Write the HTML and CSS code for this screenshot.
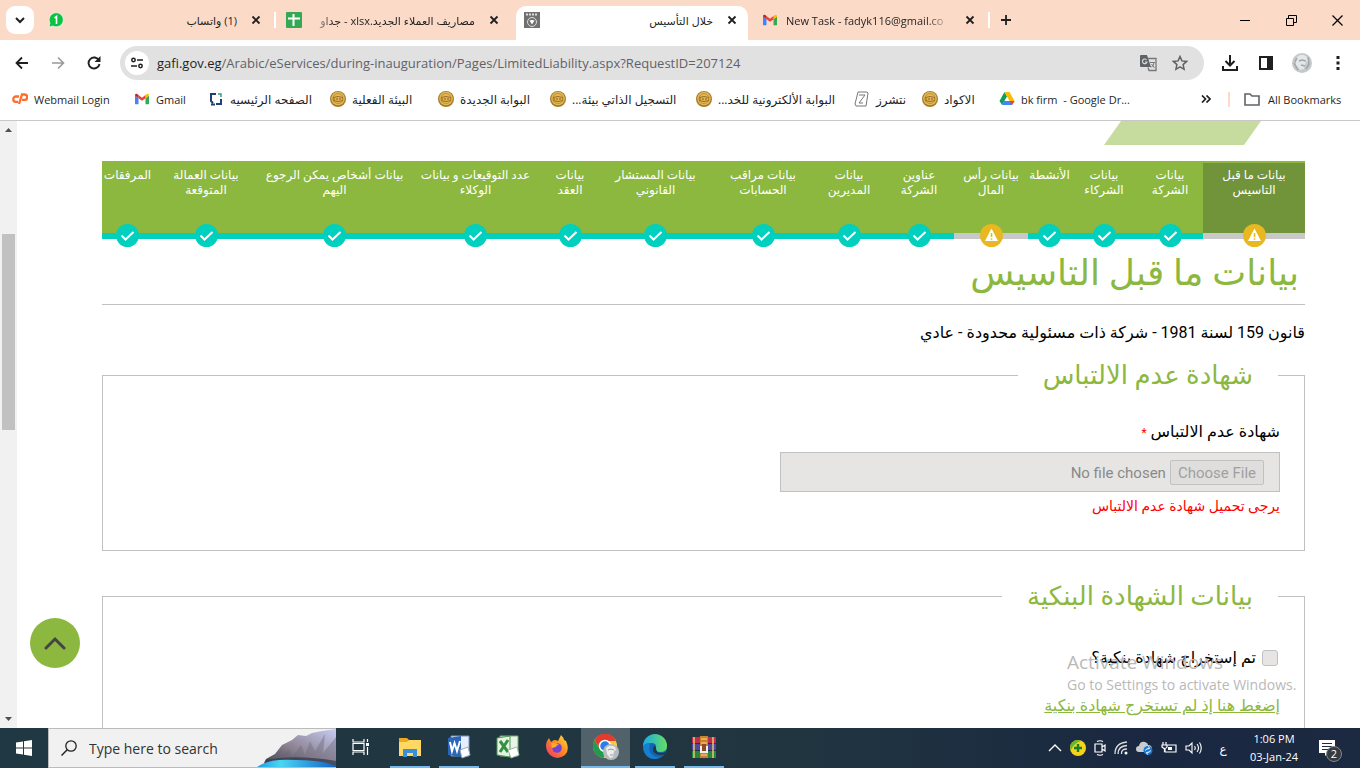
FILE: index.html
```html
<!DOCTYPE html>
<html lang="ar">
<head>
<meta charset="utf-8">
<title>خلال التأسيس</title>
<link rel="stylesheet" href="styles.css">
</head>
<body>
<svg class="defs" aria-hidden="true">
  <defs>
    <symbol id="close" viewBox="0 0 10 10"><path d="M1.500 1.500l7 7M8.500 1.500l-7 7" stroke="#1f1f1f" stroke-width="1.800"/></symbol>
    <symbol id="gmail" viewBox="0 0 16 12"><path d="M1 12h3V5L0 2v9q0 1 1 1z" fill="#4285f4"/><path d="M12 12h3q1 0 1-1V2l-4 3z" fill="#34a853"/><path d="M12 5l4-3V1.500Q15.500-.5 13.500.4L12 1.500z" fill="#fbbc04"/><path d="M4 5l4 3 4-3V1.500l-4 3-4-3z" fill="#ea4335"/><path d="M0 2l4 3V1.500L2.500.4Q.5-.5 0 1.500z" fill="#c5221f"/></symbol>
    <symbol id="seal" viewBox="0 0 16 16"><circle cx="8" cy="8" r="8" fill="#a87a2c"/><circle cx="8" cy="7.500" r="6.800" fill="#e0b954"/><circle cx="8" cy="7.500" r="5" fill="none" stroke="#c39336"/><path d="M3 6.500q5-2 10 0M3 9.500q5 2 10 0" stroke="#9c6e22" fill="none"/><path d="M3 8h10" stroke="#a87a2c" stroke-width="1.500" stroke-dasharray="2 1"/></symbol>
    <symbol id="ok" viewBox="0 0 23 23"><circle cx="11.500" cy="11.500" r="11.500" fill="#00d0bd"/><path d="M5.500 11.500l4 4L17.500 8" fill="none" stroke="#fff" stroke-width="2"/></symbol>
    <symbol id="warn" viewBox="0 0 23 23"><circle cx="11.500" cy="11.500" r="11.500" fill="#e7b820"/><path d="M11.500 4.500L18 17H5z" fill="#fff"/><path d="M11.500 9v4M11.500 14.200v1.600" stroke="#e7b820" stroke-width="1.600"/></symbol>
  </defs>
</svg>

<header class="browser">
  <div class="tabstrip">
    <button class="tab-search" aria-label="Search tabs"><svg width="12" height="8" viewBox="0 0 12 8"><path d="M2 2l4 4 4-4" fill="none" stroke="#1f1f1f" stroke-width="2"/></svg></button>
    <div class="tab">
      <svg class="fav" viewBox="0 0 16 16"><path d="M1 15l1-4a7 7 0 1 1 3 3z" fill="#0cc143" stroke="#fff" stroke-width=".6"/><path d="M6.500 6L8.500 4.500V12" fill="none" stroke="#fff" stroke-width="1.600"/></svg>
      <span class="tab-name" dir="rtl">(1) واتساب</span>
      <button class="close" aria-label="Close"><svg width="10" height="10"><use href="#close"/></svg></button>
    </div>
    <div class="tab divided">
      <svg class="fav" viewBox="0 0 16 16"><rect width="16" height="16" rx="1" fill="#34a853"/><path d="M2 6.500h12M7.500 2v12" stroke="#fff" stroke-width="2"/></svg>
      <span class="tab-name fade-left" dir="rtl">مصاريف العملاء الجديد.xlsx - جداو</span>
      <button class="close" aria-label="Close"><svg width="10" height="10"><use href="#close"/></svg></button>
    </div>
    <div class="tab active">
      <svg class="fav" viewBox="0 0 16 16"><rect width="16" height="16" fill="#707070"/><path d="M2 2.500h12" stroke="#ddd" stroke-width="2" stroke-dasharray="2 1"/><circle cx="8" cy="10" r="4.500" fill="none" stroke="#ddd"/><path d="M5.500 8.500q2.500-1 5 0L8 12.500z" fill="#fff"/></svg>
      <span class="tab-name" dir="rtl">خلال التأسيس</span>
      <button class="close" aria-label="Close"><svg width="10" height="10"><use href="#close"/></svg></button>
    </div>
    <div class="tab last">
      <svg class="fav" viewBox="0 0 16 16"><use href="#gmail" x="1" y="2" width="14" height="12"/></svg>
      <span class="tab-name fade-right">New Task - fadyk116@gmail.co</span>
      <button class="close" aria-label="Close"><svg width="10" height="10"><use href="#close"/></svg></button>
    </div>
    <button class="plain new-tab" aria-label="New tab"><svg width="12" height="12"><path d="M6 1v10M1 6h10" stroke="#1f1f1f" stroke-width="1.800"/></svg></button>
    <div class="window-buttons">
      <button class="plain" aria-label="Minimize"><svg width="10" height="10"><path d="M0 5.500h10" stroke="#000"/></svg></button>
      <button class="plain" aria-label="Restore"><svg width="11" height="11"><path d="M.5 3.500h7v7h-7zM2.500 3.500v-3h8v7h-3" fill="none" stroke="#000"/></svg></button>
      <button class="plain" aria-label="Close window"><svg width="11" height="11"><path d="M.5.500l10 10M10.500.500l-10 10" stroke="#000" stroke-width="1.200"/></svg></button>
    </div>
  </div>

  <div class="toolbar">
    <button class="plain" aria-label="Back"><svg width="14" height="14"><path d="M13 7H2M7 1.500L1.500 7 7 12.500" fill="none" stroke="#1f1f1f" stroke-width="1.800"/></svg></button>
    <button class="plain" aria-label="Forward"><svg width="14" height="14"><path d="M1 7h11M7 1.500L12.500 7 7 12.500" fill="none" stroke="#999" stroke-width="1.600"/></svg></button>
    <button class="plain" aria-label="Reload"><svg width="14" height="14"><path d="M12 4.500A5.500 5.500 0 1 0 12.500 8" fill="none" stroke="#1f1f1f" stroke-width="1.900"/><path d="M13.500 0v6h-6z" fill="#1f1f1f"/></svg></button>
    <div class="omnibox">
      <button class="site-info" aria-label="Site information"><svg width="14" height="12"><circle cx="3.500" cy="3" r="1.700" fill="none" stroke="#1f1f1f" stroke-width="1.500"/><circle cx="10.500" cy="9" r="1.700" fill="none" stroke="#1f1f1f" stroke-width="1.500"/><path d="M7 3h6M1 9h6" stroke="#1f1f1f" stroke-width="1.700"/></svg></button>
      <div class="url"><b>gafi.gov.eg</b>/Arabic/eServices/during-inauguration/Pages/LimitedLiability.aspx?RequestID=207124</div>
      <button class="plain" aria-label="Translate"><svg width="17" height="17"><path d="M1 0h6l4 12H1q-1 0-1-1V1q0-1 1-1z" fill="#5f6368"/><path d="M8 3.500h8v12H9l-1-3" fill="none" stroke="#777" stroke-width="1.300"/><path d="M6.500 4.800A2.300 2.300 0 1 0 7 7H5" fill="none" stroke="#ddd" stroke-width="1.100"/><path d="M10 7.500h5M14 7.500q0 3-3 5M11.500 9l3 4" fill="none" stroke="#777"/></svg></button>
      <button class="plain" aria-label="Bookmark"><svg width="16" height="16" viewBox="0 0 16 16"><path d="M8 1.500l1.900 4.400 4.700.5-3.500 3.200 1 4.700L8 11.900l-4.100 2.400 1-4.700L1.400 6.400l4.700-.5z" fill="none" stroke="#5f6368" stroke-width="1.500"/></svg></button>
    </div>
    <button class="plain tool" aria-label="Downloads"><svg width="16" height="16"><path d="M8 0v10M3.500 6L8 10.500 12.500 6M1 11v4h14v-4" fill="none" stroke="#1f1f1f" stroke-width="2"/></svg></button>
    <button class="plain tool" aria-label="Side panel"><svg width="14" height="14"><path d="M1 1h12v12H1z" fill="none" stroke="#1f1f1f" stroke-width="2"/><path d="M8 1h5v12H8z" fill="#1f1f1f"/></svg></button>
    <button class="plain tool" aria-label="Profile"><svg width="20" height="20"><circle cx="10" cy="10" r="10" fill="#c3c8cb"/><path d="M4 5q5-6 11-1l2 4-3 1-2 7-4 1-4-5z" fill="#e5e6e7"/><path d="M7 8l3-1 4 1M9 12l4 1M2 10l4 7M16 4l1 7-3 5M5 5L3 9" fill="none" stroke="#a1a6aa" stroke-width="1.500"/></svg></button>
    <button class="plain tool" aria-label="Menu"><svg width="4" height="16"><path d="M.5 1h3v3h-3zM.5 6.500h3v3h-3zM.5 12h3v3h-3z" fill="#1f1f1f"/></svg></button>
  </div>

  <nav class="bookmarks">
    <a href="#"><svg class="fav" viewBox="0 0 16 16"><path d="M7 5.500H4a2.700 2.700 0 0 0 0 5.400h2M7 13l3-9.500h2.500a2.700 2.700 0 0 1 0 5.400H10" fill="none" stroke="#ff6c2c" stroke-width="2.300"/></svg><span class="latin">Webmail Login</span></a>
    <a href="#"><svg class="fav" viewBox="0 0 16 16"><use href="#gmail" x="1" y="2" width="14" height="12"/></svg><span class="latin">Gmail</span></a>
    <a href="#"><svg class="fav" viewBox="0 0 16 16"><path d="M8 3H3v7l2 2M8 13h5V8M3 13.500h4" fill="none" stroke="#1f3f75" stroke-width="2"/><path d="M10 3h3v3" fill="none" stroke="#359a8d" stroke-width="1.500"/></svg><span dir="rtl">الصفحه الرئيسيه</span></a>
    <a href="#"><svg class="fav"><use href="#seal"/></svg><span dir="rtl">البيئة الفعلية</span></a>
    <a href="#"><svg class="fav"><use href="#seal"/></svg><span dir="rtl">البوابة الجديدة</span></a>
    <a href="#"><svg class="fav"><use href="#seal"/></svg><span dir="rtl">التسجيل الذاتي بيئة...</span></a>
    <a href="#"><svg class="fav"><use href="#seal"/></svg><span dir="rtl">البوابة الألكترونية للخد...</span></a>
    <a href="#"><svg class="fav" viewBox="0 0 16 16"><path d="M4 1h9l1 1-2 13H2L1 13zM5 4h6l-6 8h4" fill="none" stroke="#777"/></svg><span dir="rtl">نتشرز</span></a>
    <a href="#"><svg class="fav"><use href="#seal"/></svg><span dir="rtl">الاكواد</span></a>
    <a href="#"><svg class="fav" viewBox="0 0 16 16"><path d="M5.500 1L8 5.500 3 14 .5 10z" fill="#0f9d58"/><path d="M5.500 1h5L15.500 10h-5z" fill="#fbbc04"/><path d="M5 10h10.500L13 14H3z" fill="#4285f4"/><path d="M10.500 10h5L13 14z" fill="#ea4335"/></svg><span class="latin">bk firm &nbsp;- Google Dr...</span></a>
    <button class="plain" aria-label="More bookmarks"><svg width="10" height="8"><path d="M1 .5L4.500 4 1 7.500M5.500.5L9 4 5.500 7.500" fill="none" stroke="#1f1f1f" stroke-width="1.700"/></svg></button>
    <a class="all" href="#"><svg width="16" height="13"><path d="M1 1h5l2 2h7v9H1z" fill="none" stroke="#5f6368" stroke-width="1.600"/></svg><span class="latin">All Bookmarks</span></a>
  </nav>
</header>

<div class="viewport">
  <div class="scrollbar">
    <svg width="7" height="4"><path d="M0 4l3.500-4L7 4z" fill="#505050"/></svg>
    <div class="track"><div class="thumb"></div></div>
    <svg width="7" height="4"><path d="M0 0l3.500 4L7 0z" fill="#505050"/></svg>
  </div>

  <main class="page" dir="rtl">
    <div class="ribbon"></div>
    <ol class="steps">
      <li class="todo current"><span>بيانات ما قبل<br>التاسيس</span><svg><use href="#warn"/></svg></li>
      <li><span>بيانات<br>الشركة</span><svg><use href="#ok"/></svg></li>
      <li><span>بيانات<br>الشركاء</span><svg><use href="#ok"/></svg></li>
      <li><span>الأنشطة</span><svg><use href="#ok"/></svg></li>
      <li class="todo"><span>بيانات رأس<br>المال</span><svg><use href="#warn"/></svg></li>
      <li><span>عناوين<br>الشركة</span><svg><use href="#ok"/></svg></li>
      <li><span>بيانات<br>المديرين</span><svg><use href="#ok"/></svg></li>
      <li><span>بيانات مراقب<br>الحسابات</span><svg><use href="#ok"/></svg></li>
      <li><span>بيانات المستشار<br>القانوني</span><svg><use href="#ok"/></svg></li>
      <li><span>بيانات<br>العقد</span><svg><use href="#ok"/></svg></li>
      <li><span>عدد التوقيعات و بيانات<br>الوكلاء</span><svg><use href="#ok"/></svg></li>
      <li><span>بيانات أشخاص يمكن الرجوع<br>اليهم</span><svg><use href="#ok"/></svg></li>
      <li><span>بيانات العمالة<br>المتوقعة</span><svg><use href="#ok"/></svg></li>
      <li><span>المرفقات</span><svg><use href="#ok"/></svg></li>
    </ol>
    <h1>بيانات ما قبل التاسيس</h1>
    <p class="law">قانون 159 لسنة 1981 - شركة ذات مسئولية محدودة - عادي</p>

    <fieldset>
      <legend>شهادة عدم الالتباس</legend>
      <label class="field-label" for="cert">شهادة عدم الالتباس <span class="required">*</span></label>
      <input class="file" id="cert" type="file" disabled>
      <p class="error">يرجى تحميل شهادة عدم الالتباس</p>
    </fieldset>

    <fieldset>
      <legend>بيانات الشهادة البنكية</legend>
      <div class="check"><input id="bank" type="checkbox" disabled><label for="bank">تم إستخراج شهادة بنكية؟</label></div>
      <a class="bank-link" href="#">إضغط هنا إذ لم تستخرج شهادة بنكية</a>
    </fieldset>
  </main>

  <button class="to-top" aria-label="Back to top"><svg width="22" height="14"><path d="M2 12l9-9 9 9" fill="none" stroke="#444" stroke-width="3" stroke-linecap="round"/></svg></button>
  <div class="activate"><strong>Activate Windows</strong><span>Go to Settings to activate Windows.</span></div>
</div>

<footer class="taskbar">
  <button class="start" aria-label="Start"><svg width="16" height="16"><path d="M0 2.500l7-1v6H0zM8 1.300L16 0v7.500H8zM0 8.500h7v6l-7-1zM8 8.500h8V16l-8-1.300z" fill="#fff"/></svg></button>
  <div class="search">
    <svg width="16" height="16"><circle cx="10" cy="6" r="5.200" fill="none" stroke="#222" stroke-width="1.300"/><path d="M6.200 9.800L.5 15.500" stroke="#222" stroke-width="1.500"/></svg>
    <input type="text" placeholder="Type here to search" aria-label="Search">
    <svg class="scene" width="80" height="38" viewBox="0 0 80 38"><defs><linearGradient id="rock" x1="0" y1="1" x2="1" y2="0"><stop offset="0" stop-color="#343746"/><stop offset=".45" stop-color="#8d8290"/><stop offset="1" stop-color="#c6cdf5"/></linearGradient><linearGradient id="sea"><stop offset="0" stop-color="#1d9de5"/><stop offset=".3" stop-color="#4bd6f3"/><stop offset="1" stop-color="#1262c8"/></linearGradient></defs><path d="M8 34l2-4 9-5 7-9 10-5 6-5 8 1 6-3 10-2 14-2v38H8z" fill="url(#rock)"/><path d="M26 20l-4 9 11-8 3 7 9-12 4 10 5-14 5 10 10-17-2 19 13-16v24H12z" fill="#666678" opacity=".4"/><path d="M10 31q30-6 70 1v6H8z" fill="#3a3c4c" opacity=".8"/><path d="M1 38q12-9 38-7 28 0 41 6v1z" fill="url(#sea)"/></svg>
  </div>
  <button class="app" aria-label="Task view"><svg width="18" height="16"><path d="M1 0v3h11V0M1 16v-3h11v3M1 4.500h11v7H1zM15.500 0v3M15.500 8v8" fill="none" stroke="#fff" stroke-width="1.200"/><path d="M14 4h3v3h-3z" fill="#fff"/></svg></button>
  <button class="app open" aria-label="File Explorer"><svg width="24" height="24"><path d="M1 3h8l2 2h12v16H1z" fill="#f0a81f"/><path d="M1 7h8l2-2h12v16H1z" fill="#ffd864"/><path d="M5 22v-8h14v8h-4v-4H9v4z" fill="#3a8fd8"/></svg></button>
  <button class="app open" aria-label="Word"><svg width="24" height="24"><path d="M4 1h18v20H4z" fill="#e8eef9" stroke="#7494c9"/><path d="M1 3l13-2v21L1 20z" fill="#2c64b8"/><path d="M3 7l2 9 2.500-8L10 16l3-10" fill="none" stroke="#fff" stroke-width="2"/><path d="M13 15l8-3 2 8-8 3z" fill="#fff" stroke="#9ab"/></svg></button>
  <button class="app" aria-label="Excel"><svg width="24" height="24"><path d="M4 1h18v20H4z" fill="#e9f3e8" stroke="#78ab75"/><path d="M1 3l13-2v21L1 20z" fill="#e6f2e3" stroke="#4f9850"/><path d="M4 6l8 11M12 5L4 17" stroke="#339241" stroke-width="3"/><path d="M12 15l9-3 2 8-8 3z" fill="#fff" stroke="#9b9"/></svg></button>
  <button class="app" aria-label="Firefox"><svg width="24" height="24"><defs><linearGradient id="fox" x1="1" y1="0" x2="0" y2="1"><stop offset="0" stop-color="#ffe44a"/><stop offset=".45" stop-color="#ff8b20"/><stop offset="1" stop-color="#f02e72"/></linearGradient></defs><path d="M2 6l2-3 2 4 3-2q2 0 4 1l3-6q3 3 3 5l2 1q4 9-1 14-8 6-15 0Q-1 14 2 6z" fill="url(#fox)"/><circle cx="12" cy="13" r="4.800" fill="#7542d5"/><path d="M6 8q5-1 8 2-3 0-3 2l-4 1z" fill="#ffad24"/></svg></button>
  <button class="app open selected" aria-label="Chrome"><svg width="28" height="28"><circle cx="13" cy="13" r="12" fill="#ffcd40"/><path d="M2.500 7A12 12 0 0 1 24 8H13L8 16z" fill="#e33b2e"/><path d="M2.500 7l6 10 6 1-3 7A12 12 0 0 1 2.500 7z" fill="#219b4d"/><circle cx="13" cy="13" r="5.500" fill="#2b7de9" stroke="#fff" stroke-width="1.500"/><circle cx="19" cy="19" r="8" fill="#b8bbbd"/><path d="M14 15q4-4 9-1l1 3-2 1-1 6-3 1-3-4z" fill="#ececec"/><path d="M16 17l3-1 3 1M18 22h3" fill="none" stroke="#999"/></svg></button>
  <button class="app open" aria-label="Edge"><svg width="26" height="26"><defs><linearGradient id="edge"><stop offset="0" stop-color="#1aa8e8"/><stop offset="1" stop-color="#66e05d"/></linearGradient></defs><circle cx="13" cy="13" r="12" fill="#1166b4"/><path d="M1 12A12 12 0 0 1 25 12q0 6-7 6-5 0-4-4 1-5-5-5-5 0-8 3z" fill="url(#edge)"/><path d="M1 12q2-3 8-3-3 4-1 9 3 6 10 5-6 4-12 0-5-4-5-11z" fill="#167fd0"/><path d="M14 14q0 5 5 5 3 0 4-1 1 1 0 2-4 2-9 0-5-3-2-8 2 0 2 2z" fill="#203843"/></svg></button>
  <button class="app open" aria-label="WinRAR"><svg width="26" height="24"><path d="M1 2h24v6H1z" fill="#c22b4c"/><path d="M1 9h24v6H1z" fill="#5047a5"/><path d="M1 16h24v7H1z" fill="#268540"/><path d="M3 2v21M22 2v21" stroke="#e8c766" stroke-width="1.500"/><path d="M9 1h8v22H9z" fill="#cb812a"/><path d="M10 4h6M10 8h6M10 20h6" stroke="#ffd98b"/><path d="M9 11h8v7H9z" fill="#eee"/><path d="M11 9h4v7h-4z" fill="#8d4d22"/></svg></button>

  <div class="tray">
    <svg width="14" height="8"><path d="M1 7l6-6 6 6" fill="none" stroke="#fff" stroke-width="1.400"/></svg>
    <svg width="16" height="16"><circle cx="8" cy="8" r="8" fill="#f5d21b"/><path d="M0 8a8 8 0 0 1 8-8l3 1Q4 3 1 10z" fill="#65b82e"/><path d="M8 4v8M4 8h8" stroke="#168124" stroke-width="2.400"/></svg>
    <svg width="12" height="16"><path d="M1 4h7v8H1zM8 7l3-2v6L8 9M3 1.500q3-1.500 6 0M3 14.500q3 1.500 6 0" fill="none" stroke="#fff" stroke-width="1.200"/></svg>
    <svg width="14" height="14"><path d="M1 13Q1 2 13 1M4 13Q4 5 13 4.500M7.500 13Q7 8 13 8" fill="none" stroke="#ddd" stroke-width="1.300"/><circle cx="12" cy="12" r="1.500" fill="#fff"/></svg>
    <svg width="17" height="14"><path d="M3 11a3 3 0 0 1 0-6q1-5 6-4 3 1 3 3 4 0 4 4l-3 3z" fill="#c9ccd0"/><circle cx="12" cy="9.500" r="4.500" fill="#1678d4"/><path d="M9.500 9.500q0-2 4-2l-1-2M14.500 9.500q0 2-4 2l1 2" fill="none" stroke="#fff"/></svg>
    <svg width="16" height="12"><path d="M5 3h10v7H4V7M2 0v3M5 0v3M1 3h5v2q-2 3-5 0zM3.500 6v4" fill="none" stroke="#fff" stroke-width="1.200"/><path d="M7 5h4v3H7z" fill="#fff"/></svg>
    <svg width="17" height="14"><path d="M1 5h3l3-3v10L4 9H1zM9.500 5q1.500 2 0 4M12 3q3 4 0 8M14.500 1.500q3.500 5.500 0 11" fill="none" stroke="#fff" stroke-width="1.100"/></svg>
    <span class="lang">ع</span>
    <div class="clock"><span>1:06 PM</span><span>03-Jan-24</span></div>
    <button class="notices" aria-label="Notifications"><svg width="16" height="16"><path d="M0 0h16v13H9l-3 3v-3H0z" fill="#fff"/><path d="M3 3.500h10M3 6.500h10M3 9.500h7" stroke="#1c2b40"/></svg><span class="badge">2</span></button>
  </div>
</footer>
</body>
</html>
```
FILE: styles.css
```css
* { box-sizing: border-box; }
body {
  margin: 0;
  height: 100vh;
  display: flex;
  flex-direction: column;
  overflow: hidden;
  background: #fff;
  color: #1f1f1f;
  font-family: "Open Sans", "DejaVu Sans", sans-serif;
  font-size: 12px;
}
.defs { position: absolute; width: 0; height: 0; }
button { font: inherit; color: inherit; border: 0; padding: 0; background: none; display: grid; place-items: center; }
a { color: inherit; text-decoration: none; }
svg { flex: none; display: block; }
.fav { width: 16px; height: 16px; }
.plain { width: 24px; height: 24px; }

/* Tab strip */
.tabstrip { display: flex; height: 40px; background: #fcdac8; align-items: center; padding-left: 6px; }
.tab-search { width: 28px; height: 28px; border-radius: 9px; background: #fff; margin-right: 2px; }
.tab { flex: 0 1 238px; min-width: 0; height: 100%; display: flex; align-items: center; gap: 8px; padding: 0 7px 0 12px; }
.tab.divided { background: linear-gradient(#fff, #fff) 0 12px / 2px 16px no-repeat; }
.tab-name { flex: 1; min-width: 0; white-space: nowrap; overflow: hidden; font-size: 11px; }
.fade-left { mask-image: linear-gradient(90deg, transparent, #000 24px); }
.fade-right { mask-image: linear-gradient(270deg, transparent, #000 24px); }
.close { width: 22px; height: 22px; }
.tab.active { flex-basis: 232px; margin: 0 2px 0 4px; align-self: flex-end; height: 34px; background: #fff; border-radius: 10px 10px 0 0; padding: 0 5px 6px 8px; }
.tab.last { flex-basis: 240px; padding-right: 9px; background: linear-gradient(#fff, #fff) 100% 12px / 2px 16px no-repeat; }
.new-tab { margin-left: 4px; }
.window-buttons { margin-left: auto; display: flex; }
.window-buttons .plain { width: 46px; height: 40px; }

/* Toolbar */
.toolbar { display: flex; align-items: center; height: 46px; padding: 0 10px; gap: 12px; }
.omnibox { flex: 1; display: flex; align-items: center; height: 34px; border-radius: 17px; background: #e1e1e1; padding: 0 12px 0 5px; gap: 8px; margin: 0 2px; }
.site-info { width: 24px; height: 24px; border-radius: 50%; background: #fff; }
.url { flex: 1; font-size: 13px; color: #5f6368; white-space: nowrap; }
.url b { font-weight: 400; color: #1f1f1f; }

/* Bookmarks */
.bookmarks {
  display: grid;
  grid-template-columns: 122px 74px 122px 108px 112px 146px 158px 68px 77px 1fr 24px 138px;
  align-items: center;
  height: 35px;
  padding: 0 4px 8px 12px;
  border-bottom: 1px solid #c8c8c8;
}
.bookmarks a { display: flex; align-items: center; gap: 6px; white-space: nowrap; font-size: 12px; min-width: 0; }
.bookmarks .latin { font-size: 11px; }
.bookmarks .all { gap: 8px; padding-left: 16px; margin-left: 10px; background: linear-gradient(#fcdac8, #fcdac8) 0 / 2px 100% no-repeat; }

/* Page */
.viewport { flex: 1; min-height: 0; display: flex; position: relative; }
.scrollbar { width: 17px; background: #f1f1f1; display: flex; flex-direction: column; align-items: center; padding: 7px 0; flex: none; }
.track { flex: 1; width: 13px; padding-top: 102px; }
.thumb { height: 196px; background: #c1c1c1; }
.page { flex: 1; min-width: 0; overflow: hidden; padding: 0 55px 0 85px; font-family: Roboto, "DejaVu Sans", sans-serif; color: #000; }
.ribbon { width: 157px; height: 24px; margin: 0 44px 16px 0; background: #c6dc9e; clip-path: polygon(17px 0, 100% 0, 140px 100%, 0 100%); }
.steps {
  list-style: none;
  margin: 0;
  padding: 2px 0 0;
  display: grid;
  grid-template-columns: 102fr 66fr 66fr 43fr 74fr 70fr 70fr 102fr 113fr 58fr 131fr 151fr 106fr 51fr;
  background: #8cb83f;
  color: #fff;
  font-size: 12px;
  line-height: 15px;
  text-align: center;
}
.steps li { display: flex; flex-direction: column; align-items: center; justify-content: space-between; min-width: 0; height: 76px; padding-top: 5px; border-bottom: 6px solid #00d0bd; white-space: nowrap; }
.steps .todo { border-bottom-color: #c8c8c8; }
.steps .current { background: #71933a; }
.steps svg { width: 23px; height: 23px; margin-bottom: -14px; }
h1 { margin: 0; padding: 3px 6px 0; line-height: 62px; border-bottom: 1px solid #c1c1c1; color: #8cb83f; font-size: 36px; font-weight: 400; }
.law { margin: 16px 0 12px; font-size: 16px; line-height: 24px; }
fieldset { margin: 0 0 27px; border: 1px solid #c1c1c1; padding: 0 24px 32px; min-width: 0; }
legend { padding: 0 25px; line-height: 36px; font-size: 26px; color: #8cb83f; margin-inline-start: 2px; }
.field-label { display: block; margin-top: 26px; line-height: 26px; font-size: 16px; }
.required { color: #f00; font-size: 12px; }
.file { display: block; width: 500px; height: 40px; margin-top: 6px; border: 1px solid #c1c1c1; background: #e6e5e3; color: #8a8a8a; padding: 7px 15px; font: 15px Roboto, sans-serif; }
.file::file-selector-button { font: inherit; height: 25px; padding: 0 7px; border: 1px solid #c1c1c1; border-radius: 2px; background: #dfdedd; color: #a0a0a0; margin-inline-end: 4px; }
.error { margin: 2px 0 0; line-height: 24px; font-size: 14px; color: #f00; }
.check { display: flex; align-items: center; gap: 6px; margin-top: 32px; padding-right: 2px; font-size: 16px; line-height: 24px; }
.check input { appearance: none; width: 16px; height: 16px; margin: 0; border: 1px solid #c1c1c1; border-radius: 3px; background: #e6e5e3; }
.bank-link { display: block; margin-top: 24px; line-height: 24px; font-size: 16px; color: #8cb83f; text-decoration: underline; }
.to-top { position: absolute; left: 30px; bottom: 60px; width: 50px; height: 50px; border-radius: 50%; background: #8cb83f; }
.activate { position: absolute; right: 57px; bottom: 32px; width: 236px; display: flex; flex-direction: column; color: #b9b9b9; font-size: 14px; line-height: 22px; }
.activate strong { font-weight: 400; font-size: 19px; line-height: 24px; }

/* Taskbar */
.taskbar { display: flex; height: 40px; background: linear-gradient(90deg, #203843, #203540 60%, #192740 85%, #1b2941); color: #fff; }
.start { width: 48px; }
.search { width: 288px; display: flex; align-items: center; background: #f1f1f1; border: 1px solid #bbb; border-right: 0; padding-left: 12px; gap: 12px; }
.search input { flex: 1; min-width: 0; border: 0; background: none; padding: 0; font: 14px "Open Sans", sans-serif; color: #333; }
.search input::placeholder { color: #333; opacity: 1; }
.scene { margin-left: -12px; }
.app { width: 49px; border-bottom: 2px solid transparent; }
.app.open { background: linear-gradient(#76b9ed, #76b9ed) center 100% / 40px 2px no-repeat; background-origin: border-box; background-clip: border-box; }
.app.selected { background: #51626a; border-bottom-color: #76b9ed; }
.tray { margin-left: auto; display: flex; align-items: center; gap: 8px; }
.lang { font-size: 12px; width: 26px; text-align: center; }
.clock { width: 60px; margin-right: -8px; display: flex; flex-direction: column; align-items: center; font-size: 11px; line-height: 18px; white-space: nowrap; }
.notices { position: relative; width: 56px; height: 40px; padding-right: 10px; }
.badge { position: absolute; left: 22px; top: 18px; width: 16px; height: 16px; border-radius: 50%; background: #363a41; border: 1px solid #888; font-size: 11px; line-height: 14px; text-align: center; }
```
